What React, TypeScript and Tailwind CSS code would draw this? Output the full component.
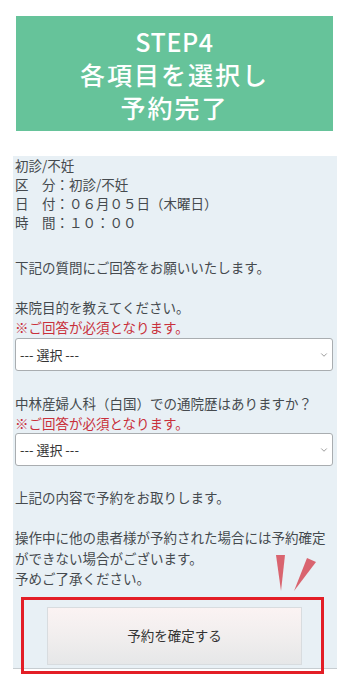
import { ChevronDown } from "lucide-react";

const jp = { fontFamily: '"Noto Sans CJK JP", "Noto Sans", sans-serif' };

const Select = () => (
  <div className="mr-[4px] flex h-[33px] items-center justify-between rounded-[3px] border border-[#a9adb0] bg-white pl-[4px] pr-[3px] text-[13px] text-[#333]">
    <span>--- 選択 ---</span>
    <ChevronDown className="h-[10px] w-[10px] text-[#888]" strokeWidth={2} />
  </div>
);

const Required = () => <p className="text-[13.5px] leading-[20px] text-[#c9303b]">※ご回答が必須となります。</p>;

export default function App() {
  return (
    <main className="min-h-[700px] bg-white pt-4" style={jp}>
      <section className="ml-4 mr-[17px] h-[115px] bg-[#66c39a] pt-[9px] text-center text-[25px] leading-[33px] font-medium text-white">
        <p className="tracking-wide">STEP4</p>
        <p className="tracking-[2px]">各項目を選択し</p>
        <p className="tracking-[2px]">予約完了</p>
      </section>

      <section className="relative ml-[13px] mr-[13px] mt-[26px] h-[513px] border-b border-[#c7cdd1] bg-[#e8f0f5] pl-[2px] text-[13.5px] leading-[19px] text-[#454a4e]">
        <div className="mt-[-1px]">
          <p>初診/不妊</p>
          <p>区　分：初診/不妊</p>
          <p>日　付：０６月０５日（木曜日）</p>
          <p>時　間：１０：００</p>
        </div>
        <p className="mt-[26px]">下記の質問にご回答をお願いいたします。</p>

        <p className="mt-[20px] leading-[20px]">来院目的を教えてください。</p>
        <Required />
        <div className="mt-[1px]">
          <Select />
        </div>

        <p className="mt-[22px] leading-[20px]">中林産婦人科（白国）での通院歴はありますか？</p>
        <Required />
        <Select />

        <p className="mt-[21px] leading-[20px]">上記の内容で予約をお取りします。</p>
        <div className="mt-[20px] leading-[20.5px]">
          <p>操作中に他の患者様が予約された場合には予約確定</p>
          <p>ができない場合がございます。</p>
          <p>予めご了承ください。</p>
        </div>

        <div className="relative mt-[8px] ml-[6px] mr-[13px] h-[77px] border-[3px] border-[#e31e26] pl-[23px] pr-[19px] pt-[7px]">
          <button className="flex h-[58px] w-full items-center justify-center border border-[#d8dcdf] bg-gradient-to-b from-[#fbf3f3] via-[#f1eeee] to-[#e6e7e8] text-[13.5px] text-[#333]">
            予約を確定する
          </button>
        </div>

        <svg className="absolute left-[262px] top-[398px]" width="50" height="38" viewBox="0 0 50 38">
          <polygon points="1,1 10,1 6,37" fill="#d9646f" />
          <polygon points="32,4 41,8 19,37" fill="#d9646f" />
        </svg>
      </section>
    </main>
  );
}
